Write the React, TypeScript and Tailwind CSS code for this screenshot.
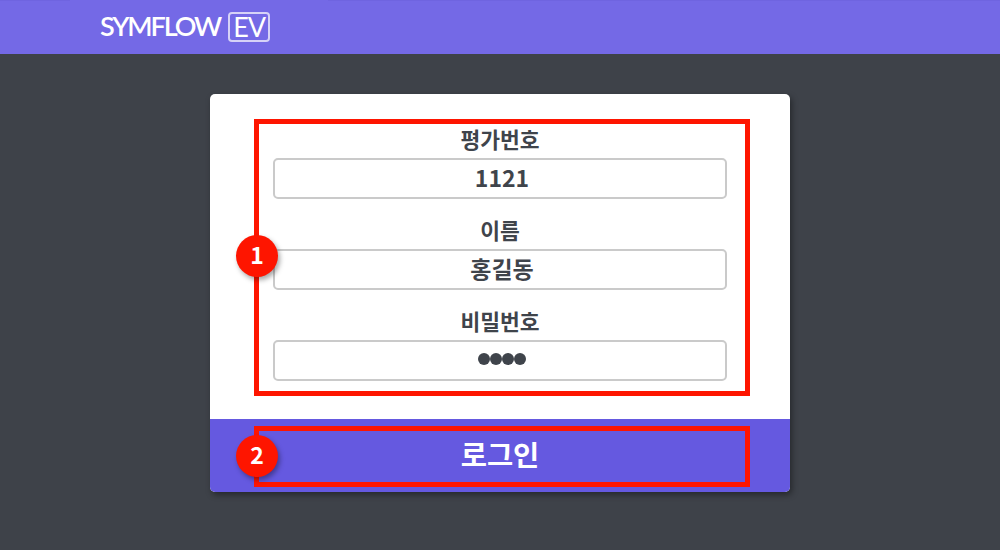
const font = "font-['Noto_Sans_CJK_KR','Noto_Sans',sans-serif]";

function Label({ text }: { text: string }) {
  return <div className="h-[26px] mb-[5px] -translate-y-[1px] text-[21.5px] leading-[26px] font-semibold text-[#3f444b]">{text}</div>;
}

function Field({ label, value }: { label: string; value: string }) {
  return (
    <div className="flex flex-col items-center">
      <Label text={label} />
      <div className="w-[454px] h-[41px] pb-[2px] pl-[4px] flex items-center justify-center bg-white rounded-[5px] border-2 border-[#cacaca]">
        <span className="text-[23px] leading-none font-bold text-[#3f444b]">{value}</span>
      </div>
    </div>
  );
}

function Dots() {
  return (
    <div className="w-[454px] h-[41px] pl-[4px] pb-[3px] flex items-center justify-center bg-white rounded-[5px] border-2 border-[#cacaca]">
      <span className="w-[12px] h-[12px] rounded-full bg-[#3f444b]"></span>
      <span className="w-[12px] h-[12px] rounded-full bg-[#3f444b]"></span>
      <span className="w-[12px] h-[12px] rounded-full bg-[#3f444b]"></span>
      <span className="w-[12px] h-[12px] rounded-full bg-[#3f444b]"></span>
    </div>
  );
}

function Badge({ n, top }: { n: number; top: string }) {
  return (
    <div className={`absolute left-[26px] ${top} w-[42px] h-[42px] pb-[3px] rounded-full bg-[#fe1500] text-white flex items-center justify-center text-[23px] font-bold leading-none shadow-[2px_3px_5px_rgba(0,0,0,0.35)]`}>
      {n}
    </div>
  );
}

export default function App() {
  return (
    <div className={`${font} w-[1000px] h-[550px] overflow-hidden bg-[#3e4249]`}>
      <header className="relative h-[54px] bg-[#7469e6] flex items-center pl-[100px]">
        <div className="absolute left-0 top-0 w-[70px] h-px bg-[#6f64e0]"></div>
        <div className="absolute left-[328px] right-0 top-0 h-px bg-[#6f64e0]"></div>
        <span className="font-['Lato',sans-serif] text-white text-[27px] leading-none tracking-[-2.1px] font-semibold -mt-[3px]">SYMFLOW</span>
        <span className="ml-[8px] w-[42px] h-[30px] -mt-[1px] flex items-center justify-center rounded-[4px] border-2 border-[#d6d2f7] font-['Lato',sans-serif] text-white text-[27px] tracking-[-1px] leading-none">EV</span>
      </header>

      <main className="pt-[40px]">
        <div className="relative w-[580px] mx-auto rounded-[5px] bg-white shadow-[2px_3px_6px_rgba(0,0,0,0.4)] overflow-hidden">
          <div className="pt-[33px] pb-[38px] flex flex-col gap-[19px]">
            <Field label="평가번호" value="1121" />
            <Field label="이름" value="홍길동" />
            <div className="flex flex-col items-center">
              <Label text="비밀번호" />
              <Dots />
            </div>
          </div>
          <button className="w-full h-[73px] pb-[3px] bg-[#6559e0] text-white text-[28.5px] font-bold leading-none">로그인</button>

          <div className="absolute left-[44px] top-[25px] w-[496px] h-[277px] border-[5px] border-[#fe1500]"></div>
          <div className="absolute left-[44px] top-[332px] w-[496px] h-[61px] border-[5px] border-[#fe1500]"></div>
          <Badge n={1} top="top-[141px]" />
          <Badge n={2} top="top-[341px]" />
        </div>
      </main>
    </div>
  );
}
